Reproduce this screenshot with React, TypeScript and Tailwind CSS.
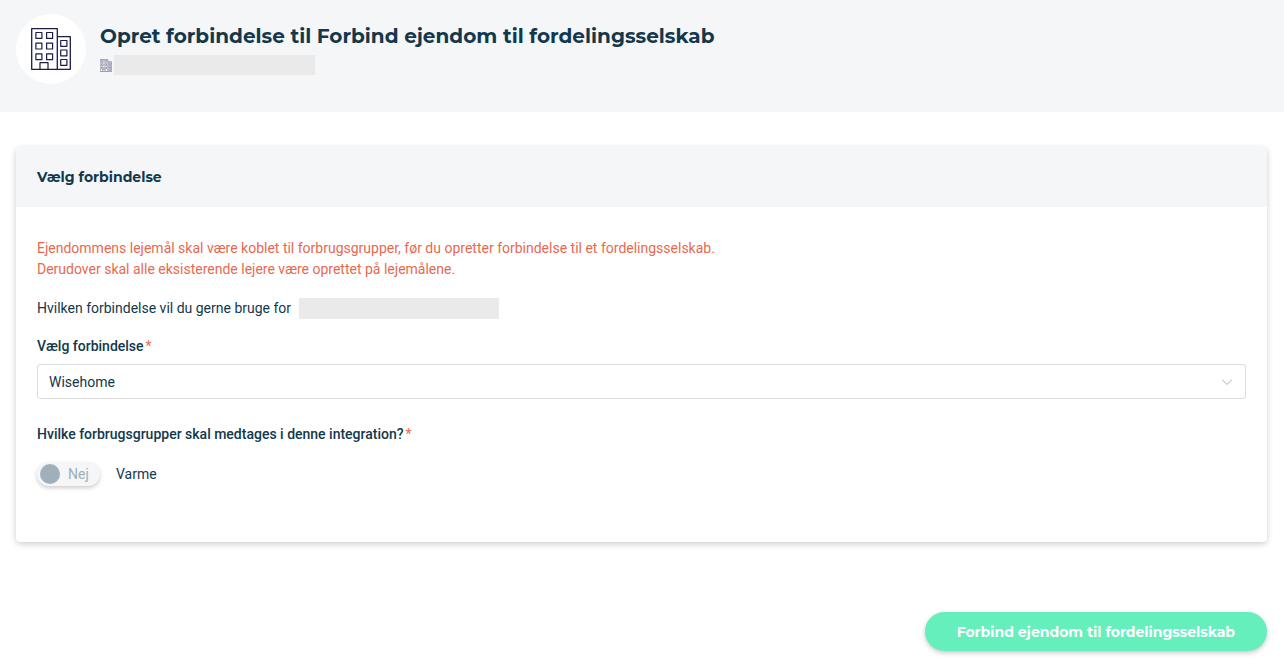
import { useState } from "react";

function BuildingIcon({ className }: { className: string }) {
  return (
    <svg viewBox="0 0 40 42" fill="none" stroke="#1c1c44" strokeWidth="1.3" strokeLinejoin="round" className={className} aria-hidden="true">
      <path d="M.7.7h25.6v40.6H.7zM26.3 8.6h13v32.7h-13" />
      <g strokeWidth="1.2">
        <path d="M4.9 4.5h6v5.9h-6zM15.6 4.5h6v5.9h-6zM4.9 15.1h6v5.9h-6zM15.6 15.1h6v5.9h-6zM4.9 25.8h6v5.9h-6zM15.6 25.8h6v5.9h-6z" />
        <path d="M29.7 12.5h6.2v5.8h-6.2zM29.7 22h6.2v5.8h-6.2zM29.7 31.5h6.2v5.8h-6.2z" />
        <path d="M9 41v-6.4h8V41" />
      </g>
    </svg>
  );
}

function Required() {
  return <span className="ml-0.5 font-normal text-[#ee6a4d]">*</span>;
}

export default function App() {
  const [heat, setHeat] = useState(false);

  return (
    <div className="min-h-screen bg-white font-['Roboto',sans-serif] text-sm leading-[21px] text-[#12384d]">
      <header className="flex min-h-28 items-start gap-3.5 bg-[#f4f6f8] px-4 pt-3.5">
        <div className="flex size-[70px] shrink-0 items-center justify-center rounded-full bg-white">
          <BuildingIcon className="h-[42px] w-10" />
        </div>
        <div className="pt-2">
          <h1 className="font-['Montserrat',sans-serif] text-xl leading-7 font-bold">
            Opret forbindelse til Forbind ejendom til fordelingsselskab
          </h1>
          <div className="mt-[5px] flex items-center gap-0.5">
            <BuildingIcon className="h-[13px] w-3" />
            <span className="h-5 w-[201px] bg-[#eaeaea]" />
          </div>
        </div>
      </header>

      <main className="pt-[35px] pr-[17px] pb-4 pl-4">
        <form onSubmit={(e) => e.preventDefault()}>
          <section className="rounded-sm bg-white shadow-[0_2px_6px_rgba(0,0,0,0.2)]">
            <h2 className="rounded-t-sm bg-[#f4f6f8] px-[21px] py-5 font-['Montserrat',sans-serif] text-sm leading-5 font-bold">
              Vælg forbindelse
            </h2>
            <div className="px-[21px] pt-[31px] pb-14">
              <p className="text-[#e8694f]">
                Ejendommens lejemål skal være koblet til forbrugsgrupper, før du opretter forbindelse til et fordelingsselskab.
                <br />
                Derudover skal alle eksisterende lejere være oprettet på lejemålene.
              </p>
              <p className="mt-[18px] flex items-center gap-2">
                Hvilken forbindelse vil du gerne bruge for
                <span className="h-[21px] w-[200px] bg-[#eaeaea]" />
              </p>

              <label htmlFor="connection" className="mt-[17px] block font-medium">
                Vælg forbindelse
                <Required />
              </label>
              <div className="mt-[7px] grid items-center">
                <select
                  id="connection"
                  className="col-start-1 row-start-1 h-[35px] w-full appearance-none rounded-[3px] border border-[#dcdcdc] bg-white px-[11px] text-sm"
                >
                  <option>Wisehome</option>
                </select>
                <svg
                  viewBox="0 0 12 8"
                  fill="none"
                  stroke="#cccccc"
                  strokeWidth="1.2"
                  className="pointer-events-none col-start-1 row-start-1 mr-[13px] h-2 w-3 justify-self-end"
                  aria-hidden="true"
                >
                  <path d="M1.2 1.6L6 6.4l4.8-4.8" />
                </svg>
              </div>

              <fieldset className="mt-[25px]">
                <legend className="font-medium">
                  Hvilke forbrugsgrupper skal medtages i denne integration?
                  <Required />
                </legend>
                <label className="mt-[17px] flex w-fit cursor-pointer items-center gap-4">
                  <input
                    type="checkbox"
                    role="switch"
                    className="peer sr-only"
                    checked={heat}
                    onChange={(e) => setHeat(e.target.checked)}
                  />
                  <span className="flex h-6 w-[63px] items-center gap-2 rounded-full bg-[#f4f6f8] px-[3px] text-[#a0afba] shadow-[0_2px_4px_rgba(0,0,0,0.2)] peer-checked:flex-row-reverse peer-focus-visible:outline-2">
                    <span className="size-5 rounded-full bg-[#a0afba]" />
                    {heat ? "Ja" : "Nej"}
                  </span>
                  Varme
                </label>
              </fieldset>
            </div>
          </section>

          <div className="mt-[70px] flex justify-end">
            <button
              type="submit"
              className="h-[39px] rounded-full bg-[#64efbc] px-8 font-['Montserrat',sans-serif] text-sm font-bold text-white shadow-[0_2px_5px_rgba(0,0,0,0.22)]"
            >
              Forbind ejendom til fordelingsselskab
            </button>
          </div>
        </form>
      </main>
    </div>
  );
}
